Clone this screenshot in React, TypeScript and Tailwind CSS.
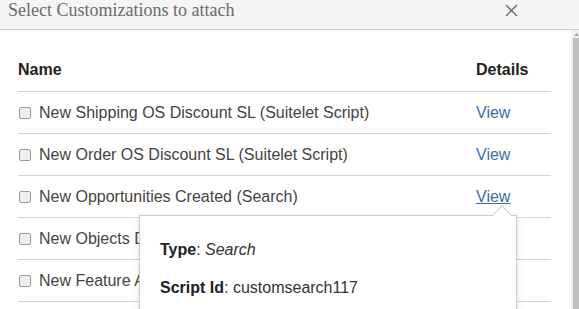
import React from 'react'

const rows = [
    'New Shipping OS Discount SL (Suitelet Script)',
    'New Order OS Discount SL (Suitelet Script)',
    'New Opportunities Created (Search)',
    'New Objects Deleted (Search)',
    'New Feature Activated (Search)',
]

export default function App() {
    return (
        <div className="relative w-[579px] h-[309px] overflow-hidden bg-white font-['Liberation_Sans',Arial,sans-serif]">
            {/* dialog header */}
            <div className="flex items-start justify-between h-[30px] pl-[8px] pr-[61px] bg-[#f5f5f5] border-b border-[#cfcfcf]">
                <span className="mt-[1px] font-['Liberation_Serif','Times_New_Roman',serif] text-[18px] text-[#6b6b6b] leading-[18px]">
                    Select Customizations to attach
                </span>
                <svg width="13" height="13" viewBox="0 0 13 13" className="mt-[4px] text-[#666]">
                    <path d="M1 1L12 12M12 1L1 12" stroke="currentColor" strokeWidth="1.3" />
                </svg>
            </div>

            <div className="flex h-[279px]">
                <div className="flex-1 pl-[18px] pr-[20px] pt-[28px]">
                    <div className="flex items-start h-[34px] border-b border-[#d4d4d4] text-[16px] leading-[24px] font-bold text-[#222]">
                        <span className="flex-1">Name</span>
                        <span className="w-[75px]">Details</span>
                    </div>
                    {rows.map((r, i) => (
                        <div key={r} className="flex items-center h-[42px] border-b border-[#d4d4d4] text-[16px] text-[#444]">
                            <span className="w-[12px] h-[12px] ml-[1px] mr-[8px] rounded-[2px] border border-[#9a9a9a] bg-[#f0f0f0]" />
                            <span className="flex-1 whitespace-nowrap">{r}</span>
                            <span className={`w-[75px] text-[#3a6fae] ${i === 2 ? 'underline' : ''}`}>View</span>
                        </div>
                    ))}
                </div>
                {/* scrollbar */}
                <div className="w-[8px] bg-[#f1f1f1] flex flex-col items-end">
                    <div className="h-[8px] w-[6px] flex items-center justify-center">
                        <svg width="5" height="3" viewBox="0 0 5 3"><path d="M0 3L2.5 0L5 3Z" fill="#a3a3a3" /></svg>
                    </div>
                    <div className="flex-1 w-[6px] bg-[#c1c1c1]" />
                </div>
            </div>

            {/* popover */}
            <div className="absolute left-[139px] top-[215px] w-[378px] h-[120px] bg-white border border-[#cccccc] shadow-[0_2px_6px_rgba(0,0,0,0.12)] px-[20px] pt-[24px] text-[16px] text-[#333]">
                <div className="absolute -top-[8px] left-[362px] w-[14px] h-[14px] -translate-x-1/2 rotate-45 bg-white border-l border-t border-[#cccccc]" />
                <div className="h-[20px] leading-[20px]">
                    <span className="font-bold text-[#222]">Type</span>: <span className="italic">Search</span>
                </div>
                <div className="h-[20px] leading-[20px] mt-[18px]">
                    <span className="font-bold text-[#222]">Script Id</span>: customsearch117
                </div>
            </div>
        </div>
    )
}
